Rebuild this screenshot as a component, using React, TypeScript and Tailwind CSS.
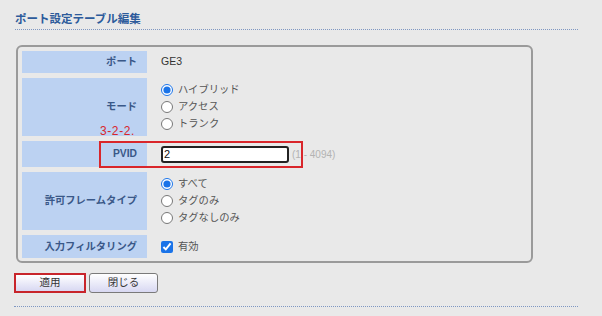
import React from 'react';

const rows = [
  { label: 'ポート', h: 'h-[22px]' },
  { label: 'モード', h: 'h-[58px]' },
  { label: 'PVID', h: 'h-[26px]' },
  { label: '許可フレームタイプ', h: 'h-[58px]' },
  { label: '入力フィルタリング', h: 'h-[23px]' },
];

const Radio: React.FC<{ label: string; checked?: boolean; name: string }> = ({ label, checked, name }) => (
  <label className="flex items-center h-[17px] gap-[5px] text-[#555] text-[10.3px]">
    <input type="radio" name={name} defaultChecked={checked} className="w-[12px] h-[12px] m-0 accent-[#1a73e8]" />
    <span>{label}</span>
  </label>
);

export default function App() {
  const values: React.ReactNode[] = [
    <span className="text-[#333] text-[10.5px]">GE3</span>,
    <div className="flex flex-col">
      <Radio name="mode" label="ハイブリッド" checked />
      <Radio name="mode" label="アクセス" />
      <Radio name="mode" label="トランク" />
    </div>,
    <div className="flex items-center gap-[3px]">
      <input
        type="text"
        defaultValue="2"
        className="w-[128px] h-[17px] bg-white border-2 border-[#222] rounded-[3px] px-[1px] text-[11px] text-[#111] outline-none"
      />
      <span className="text-[#b3b3b3] text-[10px]">(1 - 4094)</span>
    </div>,
    <div className="flex flex-col">
      <Radio name="frame" label="すべて" checked />
      <Radio name="frame" label="タグのみ" />
      <Radio name="frame" label="タグなしのみ" />
    </div>,
    <label className="flex items-center gap-[5px] text-[#555] text-[10.3px]">
      <input type="checkbox" defaultChecked className="w-[12px] h-[12px] m-0 accent-[#1a73e8]" />
      <span>有効</span>
    </label>,
  ];

  return (
    <div className="relative w-[602px] h-[316px] bg-[#e9e9e9] font-['Liberation_Sans','Noto_Sans_CJK_JP',sans-serif] overflow-hidden">
      {/* Title */}
      <div className="pt-[12px] pl-[15px] w-[578px]">
        <h2 className="text-[11.5px] leading-[14px] font-bold text-[#2d5b9b] pb-[3px] border-b border-dotted border-[#7f97c2]">
          ポート設定テーブル編集
        </h2>
      </div>

      {/* Settings box */}
      <div className="mt-[15px] ml-[16px] w-[517px] h-[218px] border-2 border-[#9a9a9a] rounded-[6px] pt-[4px] pl-[4px] flex flex-col gap-[5px]">
        {rows.map((row, i) => (
          <div key={row.label} className={`flex ${row.h}`}>
            <div className="w-[125px] shrink-0 bg-[#bcd2f2] flex items-center justify-end pr-[10px] text-[10.3px] font-bold text-[#3a5888]">
              {row.label}
            </div>
            <div className="pl-[14px] flex items-center">{values[i]}</div>
          </div>
        ))}
      </div>

      {/* Buttons */}
      <div className="mt-[10px] ml-[14px] flex gap-[3px]">
        <button className="w-[72px] h-[20px] border-2 border-[#c8252b] bg-gradient-to-b from-white to-[#d8d8f2] text-[10.5px] text-[#333]">
          適用
        </button>
        <button className="w-[69px] h-[20px] border border-[#7a7a7a] rounded-[3px] bg-gradient-to-b from-white to-[#d8d8f2] text-[10.5px] text-[#333]">
          閉じる
        </button>
      </div>

      <div className="mt-[13px] ml-[14px] w-[564px] border-b border-dotted border-[#7f97c2]" />

      {/* Annotation */}
      <span className="absolute left-[100px] top-[124px] text-[12px] leading-[14px] tracking-[0.6px] text-[#d9262b]">3-2-2.</span>
      <div className="absolute left-[99px] top-[141px] w-[204px] h-[27px] border-2 border-[#d9262b]" />
    </div>
  );
}
